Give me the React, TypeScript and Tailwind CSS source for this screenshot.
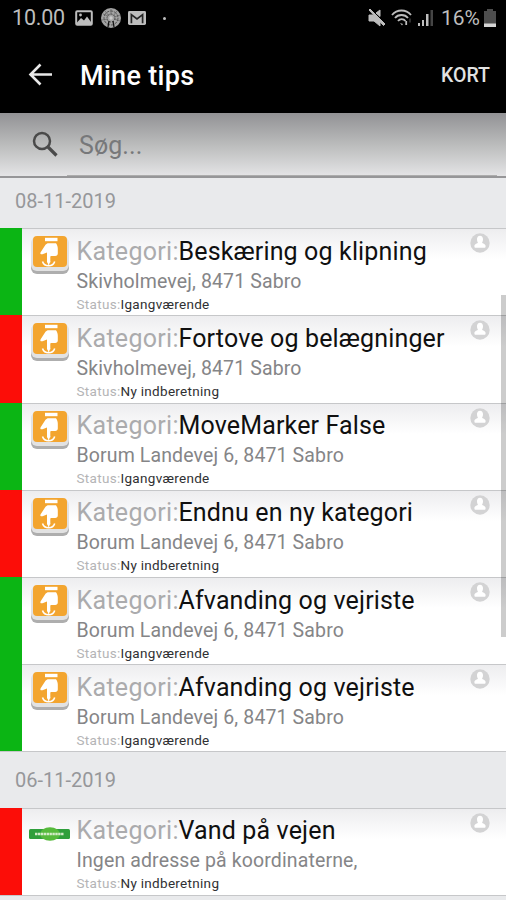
type Tip = {
  category: string;
  address: string;
  status: string;
  active: boolean;
  logo?: boolean;
};

const novemberEighth: Tip[] = [
  { category: "Beskæring og klipning", address: "Skivholmevej, 8471 Sabro", status: "Igangværende", active: true },
  { category: "Fortove og belægninger", address: "Skivholmevej, 8471 Sabro", status: "Ny indberetning", active: false },
  { category: "MoveMarker False", address: "Borum Landevej 6, 8471 Sabro", status: "Igangværende", active: true },
  { category: "Endnu en ny kategori", address: "Borum Landevej 6, 8471 Sabro", status: "Ny indberetning", active: false },
  { category: "Afvanding og vejriste", address: "Borum Landevej 6, 8471 Sabro", status: "Igangværende", active: true },
  { category: "Afvanding og vejriste", address: "Borum Landevej 6, 8471 Sabro", status: "Igangværende", active: true },
];

const novemberSixth: Tip[] = [
  { category: "Vand på vejen", address: "Ingen adresse på koordinaterne,", status: "Ny indberetning", active: false, logo: true },
];

const StatusBar = () => (
  <div className="flex h-9 items-center justify-between pl-3 pr-[10px] text-[#bdbdbd]">
    <div className="flex items-center">
      <span className="w-[63px] text-[21.5px] leading-9 tracking-[-0.2px]">10.00</span>
      <svg className="h-4 w-[18px]" viewBox="0 0 18 16">
        <rect x="1.2" y="1.2" width="15.6" height="13.6" rx="1" fill="none" stroke="currentColor" strokeWidth="2" />
        <path d="M2 12.5 6 8l3 2.5 3-4L16 12v3H2z" fill="currentColor" />
        <circle cx="5.5" cy="5" r="1.4" fill="currentColor" />
      </svg>
      <svg className="ml-[7px] h-5 w-[22px]" viewBox="0 0 22 20">
        <circle cx="11" cy="10" r="10" fill="#a3a3a3" />
        <g fill="none" stroke="#555" strokeWidth="1">
          <circle cx="11" cy="10" r="7" strokeDasharray="3 1" />
          <circle cx="11" cy="10" r="4" strokeDasharray="2 1" />
          <path d="m3 6 5 2M5 3l4 5M11 1v6M17 3l-4 5M20 7l-6 2M2 12l6-1M20 13l-6-2" strokeWidth=".6" />
        </g>
        <path d="m9 13-1 6M13 13l1 6" stroke="#111" strokeWidth="1.3" />
        <circle cx="11" cy="10" r="1.7" fill="#ccc" />
      </svg>
      <svg className="ml-[6px] h-[14px] w-[18px]" viewBox="0 0 18 15" preserveAspectRatio="none">
        <rect width="18" height="15" rx="1.5" fill="currentColor" />
        <path d="M3.4 13V4L9 8.5 14.6 4v9" fill="none" stroke="#252525" strokeWidth="1.7" />
      </svg>
      <span className="ml-[17px] size-[3px] rounded-full bg-[#bdbdbd]" />
    </div>
    <div className="flex items-center">
      <svg className="h-[18px] w-[18px]" viewBox="0 0 18 18">
        <path d="M1 6h4l2 1 5 5v5l-6-5H1zM8 4l4-3v6.5zM1 1l1-1 15 15-1.5 1.5z" fill="currentColor" stroke="currentColor" strokeWidth="1" />
      </svg>
      <svg className="ml-[5px] h-[18px] w-[22px]" viewBox="0 0 22 18" fill="none" stroke="currentColor" strokeWidth="1.8">
        <path d="M1 6C6 0 15 0 20 6M4 9c3-4 10-4 13 0M7 12c2-2.5 5.5-2.5 7.5 0" />
        <path d="m9 14 2 2.5 1-1.5z" fill="currentColor" stroke="none" />
        <path d="M15.2 12v4" />
        <path d="M19 9.5v4" stroke="#333" />
      </svg>
      <svg className="ml-[5px] h-[18px] w-[15px]" viewBox="0 0 15 18" fill="currentColor">
        <path d="M0 14h2v3H0zM4 11h2v6H4zM8 5h2.5v12H8z" />
        <path d="M12.5 1H15v16h-2.5z" fill="#454545" />
      </svg>
      <span className="ml-[8px] w-[39px] text-[21px] leading-9">16%</span>
      <svg className="ml-1 h-[18px] w-3" viewBox="0 0 12 18">
        <path d="M3 0h6v2h3v16H0V2h3z" fill="#4d4d4d" />
        <path d="M0 14.500h12V18H0z" fill="#d5d5d5" />
      </svg>
    </div>
  </div>
);

const Toolbar = () => (
  <div className="flex h-[77px] items-center pl-7 pr-4 text-white">
    <svg className="h-6 w-6" viewBox="0 0 24 24" fill="none" stroke="#e8e8e8" strokeWidth="2.6">
      <path d="M12.5 1.5 2.5 11.500l10 10M2 11.500h22" />
    </svg>
    <h1 className="ml-7 pt-0.5 text-[27px] font-medium leading-8 tracking-[0.3px]">Mine tips</h1>
    <span className="ml-auto pt-0.5 text-[19.5px] font-medium leading-8 text-[#e2e2e2]">KORT</span>
  </div>
);

const SearchField = () => (
  <div className="flex h-[65px] flex-col bg-linear-to-b from-[#929295] via-[#bcbdbd] to-[#e7e7e9]">
    <div className="flex h-[62px] items-center pl-8">
      <svg className="h-[26px] w-[26px]" viewBox="0 0 26 26" fill="none" stroke="#4a4a4a">
        <circle cx="10" cy="10" r="8" strokeWidth="2.5" />
        <path d="m15.500 15.500 9 9" strokeWidth="3.2" />
      </svg>
      <span className="ml-[21px] pt-1 text-[25px] leading-8 tracking-[0.1px] text-[#77787a]">Søg...</span>
    </div>
    <div className="ml-[67px] mr-[9px] h-px bg-[#acacac]" />
    <div className="h-[2px] bg-[#969698]" />
  </div>
);

const DateHeader = ({ date }: { date: string }) => (
  <div className="h-full bg-[#e9eaec] pl-[15px] text-[20px] text-[#96979a]">{date}</div>
);

const CategoryIcon = () => (
  <svg className="h-[40px] w-[39px]" viewBox="0 0 39 40">
    <rect x="0" y="6" width="38" height="33" rx="6" fill="#aeaeae" />
    <rect x="0" y="2" width="38" height="34" rx="6" fill="#e2e2e2" />
    <rect x="2" y="1" width="34" height="31" rx="4" fill="#f3a52f" />
    <path d="M14 2.800h12.500v3.400H14z" fill="#fff" />
    <path
      d="M14.500 9.800c.8-1 1.800-1.600 3-1.600h7.500c1.300 1.700 1.800 3.500 1.800 5.500v4.800c0 1.600-1 2.500-2.600 2.500h-3.700c-.9 0-1.200.5-1.200 1.300v5.200h-3.300V17.500l-4.500 1.700c-1.900.6-2.800-.8-1.700-2.300z"
      fill="#fff"
    />
    <path d="M11.500 26.500c1 3 3.200 4.300 6.200 4.300s5-1.300 6-4.300" fill="none" stroke="#fff" strokeWidth="1.600" />
    <path d="M16 26h3.300l-1.600 5z" fill="#fff" />
  </svg>
);

const SupplierLogo = () => (
  <svg className="mt-[18px] h-[14px] w-[41px]" viewBox="0 0 41 14">
    <rect y="2" width="41" height="10" rx="1.5" fill="#2f9f3c" />
    <ellipse cx="21" cy="7" rx="10" ry="6.800" fill="#56ba3c" />
    <path d="M6 7h29" stroke="#d3ebc8" strokeWidth="2.400" strokeDasharray="2.400 .5" />
  </svg>
);

const PersonIcon = () => (
  <svg className="ml-auto mt-[4px] h-5 w-5 shrink-0" viewBox="0 0 20 20">
    <circle cx="10" cy="10" r="9.7" fill="#d3d3d4" />
    <path d="M7 6c0-4.500 6-4.500 6 0 0 1.800-.4 2.800-1 3.600.3 1 3.600 1.200 3.600 3.600 0 1-.4 1.500-1.300 1.500H5.700c-.9 0-1.300-.5-1.300-1.500 0-2.400 3.300-2.600 3.600-3.600-.6-.8-1-1.800-1-3.600z" fill="#fff" />
  </svg>
);

const TipRow = ({ tip }: { tip: Tip }) => (
  <div className="flex h-[87.2px] shrink-0 bg-white">
    <div className={tip.active ? "w-[21.5px] shrink-0 bg-[#0bb514]" : "w-[21.5px] shrink-0 bg-[#fc0d08]"} />
    <div className="flex min-w-0 flex-1 border-t border-[#c6c7c9] bg-linear-to-b from-[#ededef] via-white via-35% to-white pr-4">
      <div className={tip.logo ? "w-[55px] shrink-0 pl-[7px]" : "w-[55px] shrink-0 pl-[9px] pt-[6px]"}>
        {tip.logo ? <SupplierLogo /> : <CategoryIcon />}
      </div>
      <div className="whitespace-nowrap pt-[5.5px]">
        <div className="flex h-[34px] items-center text-[25px] leading-[34px]">
          <span className="w-[102px] tracking-[0.3px] text-[#ababad]">Kategori:</span>
          <span className="tracking-[0.15px] text-[#101010]">{tip.category}</span>
        </div>
        <p className="h-[25px] text-[19.5px] leading-[25px] tracking-[0.13px] text-[#858587]">{tip.address}</p>
        <p className="flex h-5 text-[13.5px] leading-5 tracking-[0.3px]">
          <span className="w-[44px] text-[#b4b4b6]">Status:</span>
          <span className="text-[#303032]">{tip.status}</span>
        </p>
      </div>
      <PersonIcon />
    </div>
  </div>
);

export default function App() {
  return (
    <div className="relative flex h-[900px] w-[506px] flex-col overflow-hidden bg-[#e9eaec] font-['Roboto','Liberation_Sans',sans-serif]">
      <header className="shrink-0 bg-black">
        <StatusBar />
        <Toolbar />
      </header>
      <SearchField />
      <div className="h-[50.3px] shrink-0 leading-[46px]">
        <DateHeader date="08-11-2019" />
      </div>
      {novemberEighth.map((tip, i) => (
        <TipRow key={i} tip={tip} />
      ))}
      <div className="h-[56.5px] shrink-0 border-t border-[#c6c7c9] leading-[57px]">
        <DateHeader date="06-11-2019" />
      </div>
      {novemberSixth.map((tip) => (
        <TipRow key={tip.category} tip={tip} />
      ))}
      <div className="h-[5px] shrink-0 border-t border-[#c6c7c9]" />
      {/* scroll thumb */}
      <div className="absolute right-0 top-[295px] h-[342px] w-[5px] bg-black/20" />
    </div>
  );
}
